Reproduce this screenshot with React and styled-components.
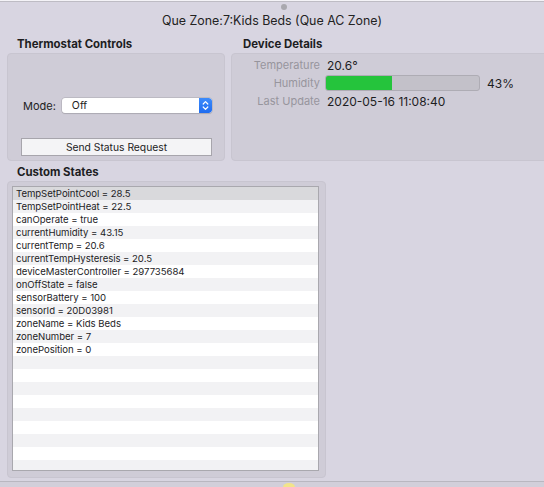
import React from "react";
import styled, { createGlobalStyle } from "styled-components";

const Global = createGlobalStyle`
  html, body { margin: 0; padding: 0; }
  body { background: #d8d5e1; font-family: Inter, "Liberation Sans", sans-serif; }
  * { box-sizing: border-box; }
`;

const Window = styled.div`
  width: 544px;
  height: 487px;
  overflow: hidden;
  position: relative;
  background: #d8d5e1;
  border-top: 1px solid #f4f3f7;
  display: flex;
  flex-direction: column;
  &::before {
    content: "";
    position: absolute;
    left: 0; right: 0; top: 0;
    height: 1px;
    background: #bebcc4;
  }
`;

const Dot = styled.span`
  position: absolute;
  left: 281px;
  top: 3px;
  width: 6px;
  height: 6px;
  border-radius: 50%;
  background: #a9a8ae;
`;

const Title = styled.div`
  height: 36px;
  padding-top: 12px;
  text-align: center;
  font-size: 12.4px;
  color: #222;
`;

const TopRow = styled.div`
  display: flex;
  gap: 6px;
  padding-left: 7px;
`;

const Column = styled.div`
  width: ${(p) => p.$w}px;
  flex: none;
  display: flex;
  flex-direction: column;
`;

const Heading = styled.div`
  font-size: 11.4px;
  font-weight: 700;
  color: #1d1d1f;
  height: 16px;
  line-height: 14px;
  padding-left: ${(p) => p.$pad}px;
`;

const Box = styled.div`
  height: ${(p) => p.$h}px;
  background: #cfccd7;
  border: 1px solid #c8c5d0;
  border-radius: 4px;
`;

const ControlsBox = styled(Box)`
  display: flex;
  flex-direction: column;
  padding: 44px 12px 0 12px;
`;

const ModeRow = styled.div`
  display: flex;
  align-items: center;
  gap: 6px;
  padding-left: 3px;
`;

const Label = styled.span`
  font-size: 11px;
  color: #222;
`;

const Select = styled.div`
  width: 153px;
  height: 15px;
  background: #fff;
  border-radius: 3px;
  box-shadow: 0 0 0 0.5px #aaa8b0, 0 1px 1px rgba(0,0,0,0.15);
  display: flex;
  align-items: center;
  justify-content: space-between;
  padding-left: 10px;
  font-size: 10.5px;
  color: #222;
  overflow: hidden;
`;

const Stepper = styled.span`
  width: 13px;
  height: 15px;
  background: linear-gradient(#3d8bfb, #1f6cf0);
  display: flex;
  align-items: center;
  justify-content: center;
  border-radius: 0 3px 3px 0;
`;

const Button = styled.div`
  margin-top: 25px;
  margin-left: 1px;
  width: 191px;
  height: 18px;
  background: #f4f4f6;
  border: 1px solid #a7a5ac;
  display: flex;
  align-items: center;
  justify-content: center;
  font-size: 10.3px;
  color: #222;
`;

const DetailsBox = styled(Box)`
  padding-top: 2px;
  display: flex;
  flex-direction: column;
`;

const DetailRow = styled.div`
  display: flex;
  align-items: center;
  height: 18px;
  gap: 7px;
`;

const DetailLabel = styled.span`
  width: 88px;
  text-align: right;
  font-size: 11px;
  color: #97959d;
`;

const DetailValue = styled.span`
  font-size: 12px;
  color: #1d1d1f;
`;

const Bar = styled.div`
  width: 155px;
  height: 16px;
  margin-left: -2px;
  background: #c3c1c9;
  border: 1px solid #aeacb4;
  border-radius: 3px;
  overflow: hidden;
`;

const Fill = styled.div`
  height: 100%;
  background: #25c43c;
`;

const Section = styled.div`
  padding: 4px 0 0 7px;
  display: flex;
  flex-direction: column;
`;

const StatesBox = styled(Box)`
  width: 319px;
  height: 297px;
  padding: 4px 6px 6px 4px;
`;

const List = styled.div`
  height: 285px;
  background: #fff;
  border: 1px solid #a9a8ae;
  overflow: hidden;
`;

const Row = styled.div`
  height: 13px;
  line-height: 13px;
  padding-left: 3px;
  font-size: 9.6px;
  letter-spacing: -0.05px;
  color: #1d1d1f;
  white-space: nowrap;
  background: ${(p) => (p.$sel ? "#d9d9dc" : p.$alt ? "#f2f2f4" : "#fff")};
`;

const Footer = styled.div`
  position: absolute;
  left: 0; right: 0; bottom: 0;
  height: 6px;
  background: #d2cfda;
  border-top: 1px solid #b9b7c0;
`;

const Glow = styled.span`
  position: absolute;
  left: 283px;
  bottom: -4px;
  width: 12px;
  height: 8px;
  border-radius: 50%;
  background: #f2e48a;
`;

const states = [
  "TempSetPointCool = 28.5",
  "TempSetPointHeat = 22.5",
  "canOperate = true",
  "currentHumidity = 43.15",
  "currentTemp = 20.6",
  "currentTempHysteresis = 20.5",
  "deviceMasterController = 297735684",
  "onOffState = false",
  "sensorBattery = 100",
  "sensorId = 20D03981",
  "zoneName = Kids Beds",
  "zoneNumber = 7",
  "zonePosition = 0",
];

export default function App() {
  const rows = Array.from({ length: 22 }, (_, i) => states[i] || "");
  const humidity = 43;
  return (
    <>
      <Global />
      <Window>
        <Dot />
        <Title>Que Zone:7:Kids Beds (Que AC Zone)</Title>
        <TopRow>
          <Column $w={218}>
            <Heading $pad={10}>Thermostat Controls</Heading>
            <ControlsBox $h={108}>
              <ModeRow>
                <Label>Mode:</Label>
                <Select>
                  Off
                  <Stepper>
                    <svg width="7" height="11" viewBox="0 0 7 11">
                      <path d="M1.2 4 L3.5 1.6 L5.8 4 M1.2 7 L3.5 9.4 L5.8 7" fill="none" stroke="#fff" strokeWidth="1.2" strokeLinecap="round" strokeLinejoin="round" />
                    </svg>
                  </Stepper>
                </Select>
              </ModeRow>
              <Button>Send Status Request</Button>
            </ControlsBox>
          </Column>
          <Column $w={330}>
            <Heading $pad={12}>Device Details</Heading>
            <DetailsBox $h={108}>
              <DetailRow>
                <DetailLabel>Temperature</DetailLabel>
                <DetailValue>20.6°</DetailValue>
              </DetailRow>
              <DetailRow>
                <DetailLabel>Humidity</DetailLabel>
                <Bar>
                  <Fill style={{ width: `${humidity}%` }} />
                </Bar>
                <DetailValue>{humidity}%</DetailValue>
              </DetailRow>
              <DetailRow>
                <DetailLabel>Last Update</DetailLabel>
                <DetailValue>2020-05-16 11:08:40</DetailValue>
              </DetailRow>
            </DetailsBox>
          </Column>
        </TopRow>
        <Section>
          <Heading $pad={10}>Custom States</Heading>
          <StatesBox>
            <List>
              {rows.map((t, i) => (
                <Row key={i} $sel={i === 0} $alt={i % 2 === 1}>
                  {t}
                </Row>
              ))}
            </List>
          </StatesBox>
        </Section>
        <Footer>
          <Glow />
        </Footer>
      </Window>
    </>
  );
}
